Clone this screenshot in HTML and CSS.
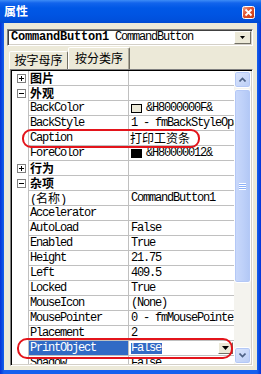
FILE: index.html
```html
<!DOCTYPE html>
<html>
<head>
<meta charset="utf-8">
<link rel="stylesheet" href="styles.css">
</head>
<body>
<div class="window">
  <div class="titlebar">
    <span class="title">属性</span>
    <span class="close">
      <svg width="13" height="13" viewBox="0 0 13 13">
        <defs>
          <linearGradient id="cg" x1="0" y1="0" x2="1" y2="1">
            <stop offset="0" stop-color="#F2A98F"/>
            <stop offset="0.45" stop-color="#E0502C"/>
            <stop offset="1" stop-color="#C23A10"/>
          </linearGradient>
        </defs>
        <rect x="0.5" y="0.5" width="12" height="12" rx="2" fill="url(#cg)" stroke="#fff"/>
        <path d="M3.5 3.5 L9.5 9.5 M9.5 3.5 L3.5 9.5" stroke="#fff" stroke-width="1.8"/>
      </svg>
    </span>
  </div>
  <div class="body">
    <div class="combo">
      <span class="combo-text"><b class="combo-bold">CommandButton1</b> CommandButton</span>
      <span class="combo-btn"><svg width="5" height="3" viewBox="0 0 5 3"><path d="M0 0H5L2.5 3Z" fill="#000"/></svg></span>
    </div>
    <div class="tabs">
      <div class="tab">按字母序</div>
      <div class="tab active">按分类序</div>
    </div>
    <div class="grid-frame">
      <div class="rows">
        <div class="row cat"><span class="gut"><span class="box plus"></span></span><span class="name">图片</span><span class="val"></span></div>
        <div class="row cat"><span class="gut"><span class="box minus"></span></span><span class="name">外观</span><span class="val"></span></div>
        <div class="row"><span class="gut"></span><span class="name">BackColor</span><span class="val"><span class="swatch light"></span>&amp;H8000000F&amp;</span></div>
        <div class="row"><span class="gut"></span><span class="name">BackStyle</span><span class="val">1 - fmBackStyleOpaque</span></div>
        <div class="row"><span class="gut"></span><span class="name">Caption</span><span class="val cjk">打印工资条</span></div>
        <div class="row"><span class="gut"></span><span class="name">ForeColor</span><span class="val"><span class="swatch dark"></span>&amp;H80000012&amp;</span></div>
        <div class="row cat"><span class="gut"><span class="box plus"></span></span><span class="name">行为</span><span class="val"></span></div>
        <div class="row cat"><span class="gut"><span class="box minus"></span></span><span class="name">杂项</span><span class="val"></span></div>
        <div class="row"><span class="gut"></span><span class="name">(<span class="cjk">名称</span>)</span><span class="val">CommandButton1</span></div>
        <div class="row"><span class="gut"></span><span class="name">Accelerator</span><span class="val"></span></div>
        <div class="row"><span class="gut"></span><span class="name">AutoLoad</span><span class="val">False</span></div>
        <div class="row"><span class="gut"></span><span class="name">Enabled</span><span class="val">True</span></div>
        <div class="row"><span class="gut"></span><span class="name">Height</span><span class="val">21.75</span></div>
        <div class="row"><span class="gut"></span><span class="name">Left</span><span class="val">409.5</span></div>
        <div class="row"><span class="gut"></span><span class="name">Locked</span><span class="val">True</span></div>
        <div class="row"><span class="gut"></span><span class="name">MouseIcon</span><span class="val">(None)</span></div>
        <div class="row"><span class="gut"></span><span class="name">MousePointer</span><span class="val">0 - fmMousePointerDefault</span></div>
        <div class="row"><span class="gut"></span><span class="name">Placement</span><span class="val">2</span></div>
        <div class="row sel"><span class="gut"></span><span class="name">PrintObject</span><span class="val"><span class="seltext">False</span><span class="dd-btn"><svg width="7" height="4" viewBox="0 0 7 4"><path d="M0 0H7L3.5 4Z" fill="#000"/></svg></span></span></div>
        <div class="row"><span class="gut"></span><span class="name">Shadow</span><span class="val">False</span></div>
      </div>
      <div class="sb">
        <div class="sb-btn"><svg width="7" height="5" viewBox="0 0 7 5"><path d="M0.5 4.5 L3.5 1.5 L6.5 4.5" fill="none" stroke="#4D6185" stroke-width="1.6"/></svg></div>
        <div class="sb-thumb"><span class="grip"></span></div>
        <div class="sb-track"></div>
        <div class="sb-btn"><svg width="7" height="5" viewBox="0 0 7 5"><path d="M0.5 0.5 L3.5 3.5 L6.5 0.5" fill="none" stroke="#4D6185" stroke-width="1.6"/></svg></div>
      </div>
    </div>
  </div>
  <div class="mark mark-caption"></div>
  <div class="mark mark-print"></div>
</div>
</body>
</html>
```

FILE: styles.css
```css
html, body {
  margin: 0;
  padding: 0;
  background: #fff;
}

.window {
  position: relative;
  width: 261px;
  height: 374px;
  display: flex;
  flex-direction: column;
  background: linear-gradient(90deg, #0831D9 0px, #0A4BE0 2px, #1660EE 4px, #1660EE 257px, #0A4BE0 259px, #0831D9 261px);
  overflow: hidden;
}

.titlebar {
  height: 23px;
  flex: none;
  display: flex;
  align-items: center;
  justify-content: space-between;
  padding: 0 6px 0 4px;
  background: linear-gradient(#3D8CF6 0px, #1264EC 3px, #0058E6 8px, #0054E2 15px, #0050DC 20px, #0049D1 23px);
}

.title {
  color: #fff;
  font: bold 12px "Noto Sans CJK SC", sans-serif;
  line-height: 14px;
  margin-top: -1px;
}

.close {
  width: 13px;
  height: 13px;
  display: block;
  margin-top: 1px;
}
.close svg { display: block; }

.body {
  flex: 1;
  margin: 0 4px 4px 4px;
  background: #ECE9D8;
  display: flex;
  flex-direction: column;
  padding: 6px 4px 4px 3px;
  min-height: 0;
}

.combo {
  flex: none;
  height: 17px;
  box-sizing: border-box;
  border: 1px solid;
  border-color: #808080 #fff #fff #808080;
  box-shadow: inset 1px 1px #404040, inset -1px -1px #D4D0C8;
  background: #fff;
  display: flex;
  align-items: center;
  padding: 1px 1px 1px 3px;
}

.combo-text {
  flex: 1;
  font: 12px "Liberation Mono", monospace;
  letter-spacing: -1.2px;
  line-height: 13px;
  white-space: nowrap;
  color: #000;
}
.combo-bold {
  font-weight: bold;
  letter-spacing: -0.2px;
}

.combo-btn {
  width: 17px;
  height: 13px;
  box-sizing: border-box;
  background: #ECE9D8;
  border: 1px solid;
  border-color: #fff #716F64 #716F64 #fff;
  display: flex;
  align-items: center;
  justify-content: center;
}
.combo-btn svg { display: block; }

.tabs {
  flex: none;
  height: 23px;
  display: flex;
  align-items: flex-end;
  padding-left: 2px;
}

.tab {
  box-sizing: border-box;
  height: 18px;
  width: 59px;
  border: 1px solid;
  border-bottom: none;
  border-color: #fff #716F64 transparent #fff;
  border-radius: 2px 2px 0 0;
  font: 12px "Noto Sans CJK SC", sans-serif;
  line-height: 16px;
  text-align: center;
  color: #000;
  background: #ECE9D8;
}
.tab.active {
  height: 22px;
  width: 62px;
  line-height: 19px;
  box-shadow: inset -1px 0 #ACA899;
}

.grid-frame {
  flex: 1;
  min-height: 0;
  margin-left: 3px;
  display: flex;
  box-sizing: border-box;
  border: 1px solid;
  border-color: #808080 #fff #fff #808080;
  box-shadow: inset 1px 1px #000, inset -1px -1px #D4D0C8;
  padding: 1px;
  background: #fff;
  overflow: hidden;
}

.rows {
  width: 222px;
  flex: none;
  overflow: hidden;
  background: #fff;
}

.row {
  display: grid;
  grid-template-columns: 17px 100px 105px;
  height: 15px;
  font: 12px "Liberation Mono", monospace;
  letter-spacing: -1.2px;
  color: #000;
}

.gut {
  box-sizing: border-box;
  border-right: 1px solid #C0C0C0;
  display: flex;
  align-items: center;
  padding-left: 5px;
}

.name, .val {
  box-sizing: border-box;
  height: 15px;
  border-bottom: 1px solid #C0C0C0;
  line-height: 14px;
  white-space: nowrap;
  overflow: hidden;
}
.name {
  border-right: 1px solid #C0C0C0;
  padding-left: 1px;
}
.val {
  padding-left: 2px;
  display: flex;
  align-items: center;
}

.cat .name {
  font: bold 12px "Noto Sans CJK SC", sans-serif;
  letter-spacing: 0;
  line-height: 14px;
}

.cjk {
  font-family: "Noto Sans CJK SC", sans-serif;
  font-size: 12px;
  letter-spacing: 0;
}
.val.cjk { padding-left: 1px; }

.box {
  width: 9px;
  height: 9px;
  box-sizing: border-box;
  border: 1px solid #808080;
  background: #fff;
  position: relative;
}
.box::before {
  content: "";
  position: absolute;
  left: 1px;
  top: 3px;
  width: 5px;
  height: 1px;
  background: #000;
}
.box.plus::after {
  content: "";
  position: absolute;
  left: 3px;
  top: 1px;
  width: 1px;
  height: 5px;
  background: #000;
}

.swatch {
  width: 11px;
  height: 9px;
  box-sizing: border-box;
  border: 1px solid #000;
  margin-right: 4px;
  flex: none;
}
.swatch.light { background: #ECE9D8; }
.swatch.dark { background: #000; }

.sel .name {
  background: #316AC5;
  color: #fff;
}
.sel .val {
  padding-right: 1px;
}
.seltext {
  background: #316AC5;
  color: #fff;
  line-height: 11px;
  padding: 0 1px 0 0;
}
.dd-btn {
  margin-left: auto;
  width: 15px;
  height: 12px;
  box-sizing: border-box;
  background: #ECE9D8;
  border: 1px solid;
  border-color: #fff #716F64 #716F64 #fff;
  display: flex;
  align-items: center;
  justify-content: center;
}
.dd-btn svg { display: block; }

.sb {
  width: 17px;
  flex: none;
  display: flex;
  flex-direction: column;
  background: #F4F3EE;
}
.sb-btn {
  height: 17px;
  flex: none;
  box-sizing: border-box;
  border: 1px solid #fff;
  border-radius: 3px;
  background: linear-gradient(135deg, #DCE6FC, #BACDF6);
  box-shadow: inset 0 0 0 1px #B4C8F6;
  display: flex;
  align-items: center;
  justify-content: center;
}
.sb-btn svg { display: block; }
.sb-thumb {
  height: 194px;
  flex: none;
  margin-top: 1px;
  box-sizing: border-box;
  border: 1px solid #fff;
  border-radius: 3px;
  background: linear-gradient(90deg, #CAD9FB, #BCCFF8 60%, #B1C7F5);
  box-shadow: inset 0 0 0 1px #B4C8F6;
  display: flex;
  align-items: center;
  justify-content: center;
}
.grip {
  width: 7px;
  height: 7px;
  background: repeating-linear-gradient(#fff 0 1px, #8CB0F8 1px 2px);
}
.sb-track { flex: 1; }

.mark {
  position: absolute;
  box-sizing: border-box;
  border: 2px solid #E3141B;
  border-radius: 9px;
}
.mark-caption {
  left: 22px;
  top: 129px;
  width: 178px;
  height: 19px;
}
.mark-print {
  left: 17px;
  top: 338px;
  width: 216px;
  height: 21px;
  border-radius: 10px;
}
```
